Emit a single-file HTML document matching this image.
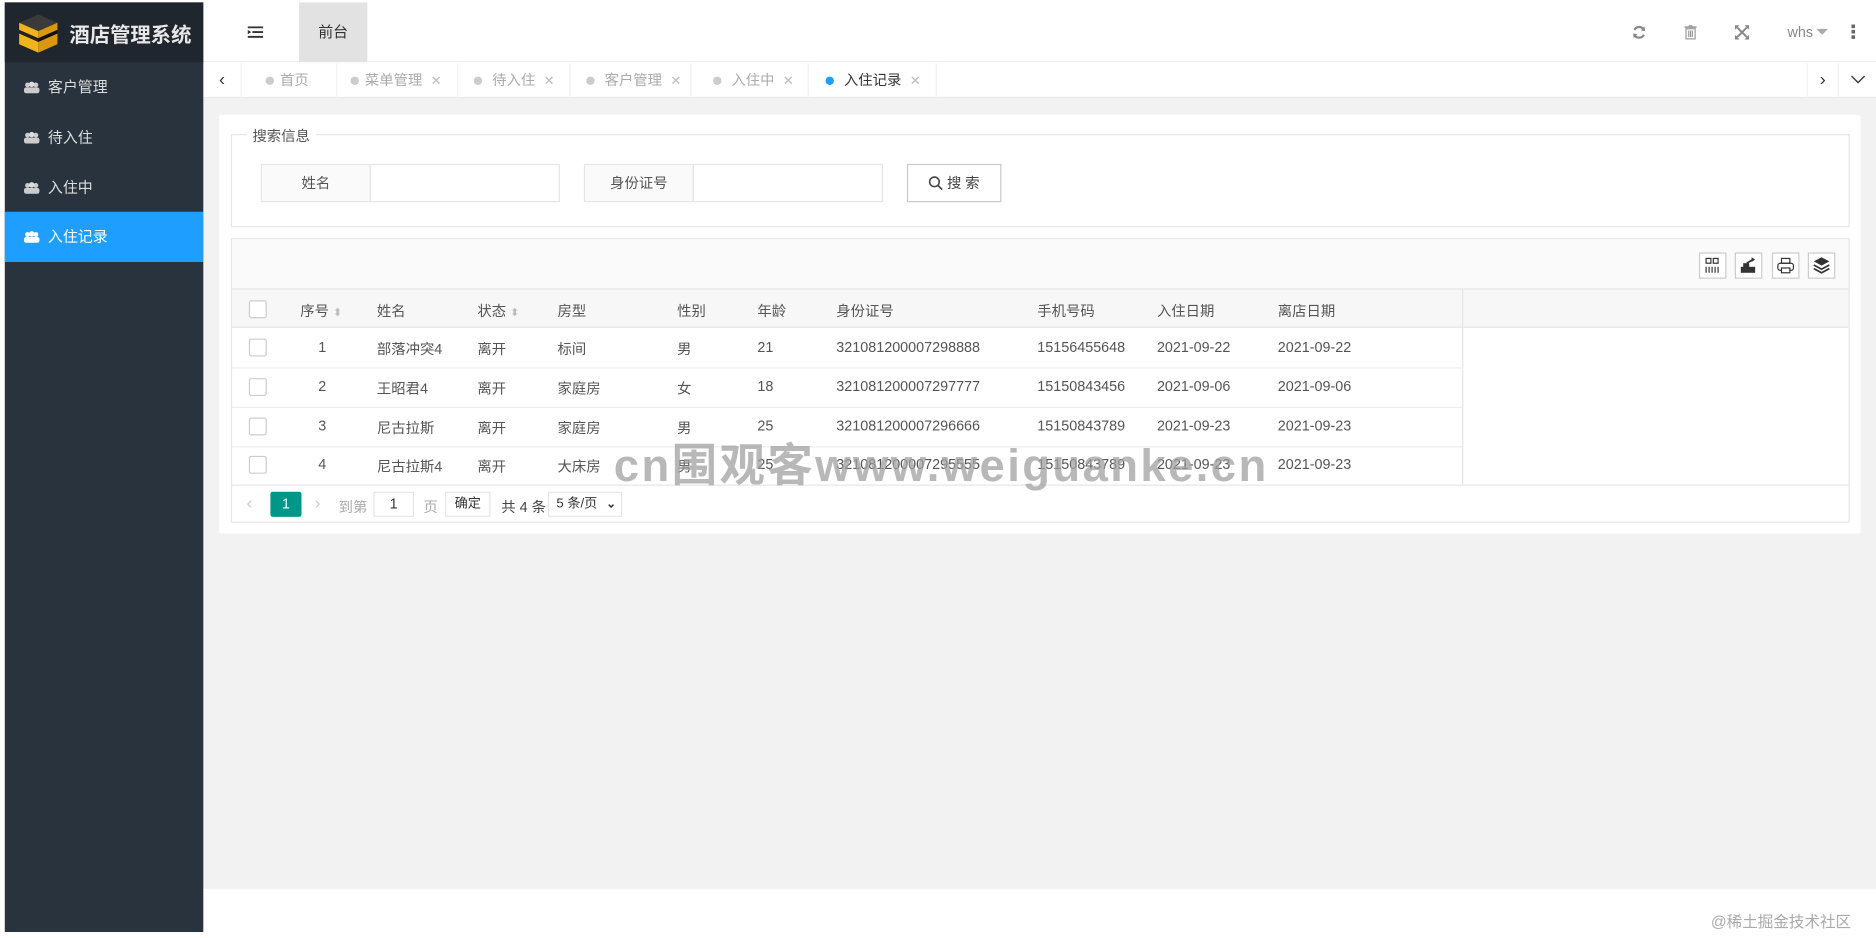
<!DOCTYPE html>
<html><head><meta charset="utf-8">
<style>
*{box-sizing:border-box;margin:0;padding:0}
html,body{width:1876px;height:938px;overflow:hidden;background:#fff;font-family:"Liberation Sans","Noto Sans CJK SC",sans-serif;font-size:12px;color:#555}
#w{position:absolute;left:0;top:0;width:1568px;height:784px;transform:scale(1.19643);transform-origin:0 0}
.a{position:absolute}
.side{left:4px;top:2px;width:166px;height:777px;background:#28333e}
.logo{left:0;top:0;width:166px;height:50px;background:#20262d}
.logo span{position:absolute;left:54px;top:13px;color:#e8e8e8;font-size:17px;font-weight:bold}
.mi{position:absolute;left:0;width:166px;height:42px;line-height:42px;padding-left:36px;color:#ddd;font-size:12.5px}
.mi i{position:absolute;left:16px;top:16px;width:13px;height:10px;display:block;line-height:0}
.mi i svg{display:block}
.hdr{left:170px;top:2px;width:1398px;height:50px;background:#fff;border-bottom:1px solid #eee;border-top-right-radius:8px}
.tabs{left:170px;top:53px;width:1398px;height:29px;background:#fff;border-bottom:1px solid #e8e8e8}
.tab{position:absolute;top:0;height:29px;line-height:28px;border-right:1px solid #f0f0f0;color:#aaa;font-size:12px}
.tab b{display:inline-block;width:7px;height:7px;border-radius:50%;background:#ccc;margin-right:5px;vertical-align:0}
.tab em{font-style:normal;color:#bbb;margin-left:7px;font-size:11px}
.cont{left:170px;top:82px;width:1398px;height:661px;background:#f2f2f2}
.foot{left:170px;top:743px;width:1398px;height:36px;background:#fff}
.card{left:183px;top:96px;width:1372px;height:350px;background:#fff;border-radius:2px}
.box{position:absolute;border:1px solid #e6e6e6}
.th,.td{position:absolute;font-size:12px}
.cb{position:absolute;left:14px;width:15px;height:15px;border:1px solid #ccc;background:#fff;border-radius:2px}
.tbi{position:absolute;top:11px;width:23px;height:22px;border:1px solid #ccc;background:#fff}
</style></head><body><div id="w">
<div class="a side">
 <div class="a logo">
  <svg style="position:absolute;left:10px;top:8px" width="36" height="36" viewBox="0 0 36 36"><polygon points="18,2 34,9 18,16 2,9" fill="#3a3a3a"/><polygon points="2,9 18,16 18,22 2,15" fill="#f2b41c"/><polygon points="34,9 18,16 18,22 34,15" fill="#d9980e"/><polygon points="2,18 18,25 18,34 2,27" fill="#f2b41c"/><polygon points="34,18 18,25 18,34 34,27" fill="#d9980e"/><polygon points="2,15 18,22 18,25 2,18" fill="#222"/><polygon points="34,15 18,22 18,25 34,18" fill="#111"/></svg>
  <span>酒店管理系统</span></div>
 <div class="mi" style="top:50px"><i><svg width="13" height="10"><circle cx="3" cy="3" r="2" fill="#ccc"/><circle cx="10" cy="3" r="2" fill="#ccc"/><circle cx="6.5" cy="2.5" r="2.3" fill="#ddd"/><rect x="0" y="5" width="13" height="5" rx="2" fill="#ccc"/></svg></i>客户管理</div>
 <div class="mi" style="top:92px"><i><svg width="13" height="10"><circle cx="3" cy="3" r="2" fill="#ccc"/><circle cx="10" cy="3" r="2" fill="#ccc"/><circle cx="6.5" cy="2.5" r="2.3" fill="#ddd"/><rect x="0" y="5" width="13" height="5" rx="2" fill="#ccc"/></svg></i>待入住</div>
 <div class="mi" style="top:134px"><i><svg width="13" height="10"><circle cx="3" cy="3" r="2" fill="#ccc"/><circle cx="10" cy="3" r="2" fill="#ccc"/><circle cx="6.5" cy="2.5" r="2.3" fill="#ddd"/><rect x="0" y="5" width="13" height="5" rx="2" fill="#ccc"/></svg></i>入住中</div>
 <div class="mi" style="top:175px;background:#1e9fff;color:#fff"><i><svg width="13" height="10"><circle cx="3" cy="3" r="2" fill="#fff"/><circle cx="10" cy="3" r="2" fill="#fff"/><circle cx="6.5" cy="2.5" r="2.3" fill="#fff"/><rect x="0" y="5" width="13" height="5" rx="2" fill="#fff"/></svg></i>入住记录</div>
</div>
<div class="a hdr">
 <svg style="position:absolute;left:37px;top:20px" width="13" height="10"><rect x="0" y="0" width="13" height="1.6" fill="#333"/><rect x="4" y="4" width="9" height="1.6" fill="#333"/><rect x="0" y="8" width="13" height="1.6" fill="#333"/><polygon points="0,3 3,4.8 0,6.6" fill="#333"/></svg>
 <div style="position:absolute;left:80px;top:0;width:57px;height:50px;background:#e2e2e2;line-height:50px;text-align:center;color:#333;font-size:12.5px">前台</div>
 <svg style="position:absolute;left:1194px;top:19px" width="12" height="12" viewBox="0 0 12 12"><path d="M10 4A4.5 4.5 0 0 0 2 4M2 8a4.5 4.5 0 0 0 8 0" stroke="#888" stroke-width="1.8" fill="none"/><polygon points="10.5,1 11,5 7.5,4.5" fill="#888"/><polygon points="1.5,11 1,7 4.5,7.5" fill="#888"/></svg>
 <svg style="position:absolute;left:1238px;top:19px" width="10" height="12"><rect x="0" y="1" width="10" height="1.3" fill="#999"/><rect x="3.5" y="0" width="3" height="1.5" fill="#999"/><rect x="1.2" y="3" width="7.6" height="8.5" fill="none" stroke="#999"/><line x1="3.5" y1="4.5" x2="3.5" y2="10" stroke="#999"/><line x1="5" y1="4.5" x2="5" y2="10" stroke="#999"/><line x1="6.5" y1="4.5" x2="6.5" y2="10" stroke="#999"/></svg>
 <svg style="position:absolute;left:1280px;top:19px" width="12" height="12"><path d="M0 0h4l-4 4zM12 0v4l-4-4zM0 12v-4l4 4zM12 12h-4l4-4z" fill="#888"/><path d="M2 2l8 8M10 2l-8 8" stroke="#888" stroke-width="1.6"/></svg>
 <span style="position:absolute;left:1324px;top:18px;color:#888;font-size:12px">whs</span>
 <svg style="position:absolute;left:1348px;top:22px" width="10" height="6"><polygon points="0,0 10,0 5,5" fill="#aaa"/></svg>
 <svg style="position:absolute;left:1377px;top:18px" width="4" height="13"><rect x="0.5" y="0.5" width="3" height="3" fill="#666"/><rect x="0.5" y="5" width="3" height="3" fill="#666"/><rect x="0.5" y="9.5" width="3" height="3" fill="#666"/></svg>
</div>
<div class="a tabs">
 <div class="tab" style="left:0;width:32px;text-align:center;color:#333;font-size:15px">‹</div>
 <div class="tab" style="left:32px;width:80px;padding-left:20px"><b></b>首页</div>
 <div class="tab" style="left:112px;width:101px;padding-left:11px"><b></b>菜单管理<em>✕</em></div>
 <div class="tab" style="left:213px;width:94px;padding-left:13px"><b></b> 待入住<em>✕</em></div>
 <div class="tab" style="left:307px;width:101px;padding-left:13px"><b></b> 客户管理<em>✕</em></div>
 <div class="tab" style="left:408px;width:98px;padding-left:18px"><b></b> 入住中<em>✕</em></div>
 <div class="tab" style="left:506px;width:107px;padding-left:14px;color:#333"><b style="background:#1e9fff"></b> 入住记录<em>✕</em></div>
 <div class="tab" style="left:1340px;width:27px;border-left:1px solid #f0f0f0;text-align:center;color:#333;font-size:15px">›</div>
 <svg style="position:absolute;left:1377px;top:10px" width="12" height="7"><path d="M0.5 0.5l5.5 5.5 5.5-5.5" stroke="#444" fill="none" stroke-width="1.2"/></svg>
</div>
<div class="a cont"></div>
<div class="a foot"></div>
<div class="a" style="left:1430px;top:760px;color:#aaa;font-size:13px">@稀土掘金技术社区</div>
<div class="a card">
 <div class="box" style="left:10px;top:16px;width:1353px;height:78px"></div>
 <div class="a" style="left:23px;top:9px;background:#fff;padding:0 5px;color:#555;font-size:12px">搜索信息</div>
 <div class="box" style="left:35px;top:41px;width:92px;height:32px;background:#fafafa;text-align:center;line-height:30px">姓名</div>
 <div class="box" style="left:126px;top:41px;width:159px;height:32px"></div>
 <div class="box" style="left:305px;top:41px;width:92px;height:32px;background:#fafafa;text-align:center;line-height:30px">身份证号</div>
 <div class="box" style="left:396px;top:41px;width:159px;height:32px"></div>
 <div class="box" style="left:575px;top:41px;width:79px;height:32px;border-color:#c9c9c9;text-align:center;line-height:30px;color:#444">
  <svg style="vertical-align:-2px" width="12" height="12"><circle cx="5" cy="5" r="4" stroke="#444" fill="none" stroke-width="1.3"/><line x1="8" y1="8" x2="11.5" y2="11.5" stroke="#444" stroke-width="1.4"/></svg> 搜 索</div>
 <div class="box" style="left:10px;top:103px;width:1353px;height:238px">
  <div class="a" style="left:0;top:0;width:1351px;height:42px;background:#fafafa;border-bottom:1px solid #e6e6e6">
   <div class="tbi" style="left:1226px"><svg width="21" height="20"><rect x="5" y="4" width="4" height="4" fill="none" stroke="#333"/><rect x="11" y="4" width="4" height="4" fill="none" stroke="#333"/><path d="M5 11v5M7.5 11v5M10 11v5M12.5 11v5M15 11v5" stroke="#333"/></svg></div>
   <div class="tbi" style="left:1256px"><svg width="21" height="20"><rect x="4" y="11" width="12" height="5" fill="#333"/><rect x="6" y="8" width="5" height="4" fill="#333"/><path d="M9 8l5-3" stroke="#333" stroke-width="1.5"/><polygon points="13,3 16,5 13,7" fill="#333"/></svg></div>
   <div class="tbi" style="left:1287px"><svg width="21" height="20"><rect x="7" y="4" width="7" height="4" fill="none" stroke="#333"/><rect x="4" y="8" width="13" height="6" rx="2" fill="none" stroke="#333"/><rect x="7" y="12" width="7" height="4" fill="#fff" stroke="#333"/></svg></div>
   <div class="tbi" style="left:1317px"><svg width="21" height="20"><polygon points="10.5,3 17,6.5 10.5,10 4,6.5" fill="#333"/><path d="M4 9.5l6.5 3.5 6.5-3.5M4 12.5l6.5 3.5 6.5-3.5" stroke="#333" fill="none" stroke-width="1.4"/></svg></div>
  </div>
  <div class="a" style="left:0;top:42px;width:1351px;height:32px;background:#f7f7f7;border-bottom:1px solid #e6e6e6"></div>
  <div class="a" style="left:1028px;top:42px;width:1px;height:163px;background:#e6e6e6"></div>
  <div class="a" style="left:0;top:107px;width:1028px;height:1px;background:#eee"></div>
  <div class="a" style="left:0;top:140px;width:1028px;height:1px;background:#eee"></div>
  <div class="a" style="left:0;top:173px;width:1028px;height:1px;background:#eee"></div>
  <div class="a" style="left:0;top:205px;width:1351px;height:1px;background:#e6e6e6"></div>
  <div class="cb" style="top:51px"></div>
  <div class="th" style="left:57px;top:51px">序号 <span style="color:#bbb;font-size:9px">⬍</span></div>
  <div class="th" style="left:121px;top:51px">姓名</div>
  <div class="th" style="left:205px;top:51px">状态 <span style="color:#bbb;font-size:9px">⬍</span></div>
  <div class="th" style="left:272px;top:51px">房型</div>
  <div class="th" style="left:372px;top:51px">性别</div>
  <div class="th" style="left:439px;top:51px">年龄</div>
  <div class="th" style="left:505px;top:51px">身份证号</div>
  <div class="th" style="left:673px;top:51px">手机号码</div>
  <div class="th" style="left:773px;top:51px">入住日期</div>
  <div class="th" style="left:874px;top:51px">离店日期</div>

  <div class="cb" style="top:83px"></div><div class="td" style="left:72px;top:83px">1</div><div class="td" style="left:121px;top:83px">部落冲突4</div><div class="td" style="left:205px;top:83px">离开</div><div class="td" style="left:272px;top:83px">标间</div><div class="td" style="left:372px;top:83px">男</div><div class="td" style="left:439px;top:83px">21</div><div class="td" style="left:505px;top:83px">321081200007298888</div><div class="td" style="left:673px;top:83px">15156455648</div><div class="td" style="left:773px;top:83px">2021-09-22</div><div class="td" style="left:874px;top:83px">2021-09-22</div>
  <div class="cb" style="top:116px"></div><div class="td" style="left:72px;top:116px">2</div><div class="td" style="left:121px;top:116px">王昭君4</div><div class="td" style="left:205px;top:116px">离开</div><div class="td" style="left:272px;top:116px">家庭房</div><div class="td" style="left:372px;top:116px">女</div><div class="td" style="left:439px;top:116px">18</div><div class="td" style="left:505px;top:116px">321081200007297777</div><div class="td" style="left:673px;top:116px">15150843456</div><div class="td" style="left:773px;top:116px">2021-09-06</div><div class="td" style="left:874px;top:116px">2021-09-06</div>
  <div class="cb" style="top:149px"></div><div class="td" style="left:72px;top:149px">3</div><div class="td" style="left:121px;top:149px">尼古拉斯</div><div class="td" style="left:205px;top:149px">离开</div><div class="td" style="left:272px;top:149px">家庭房</div><div class="td" style="left:372px;top:149px">男</div><div class="td" style="left:439px;top:149px">25</div><div class="td" style="left:505px;top:149px">321081200007296666</div><div class="td" style="left:673px;top:149px">15150843789</div><div class="td" style="left:773px;top:149px">2021-09-23</div><div class="td" style="left:874px;top:149px">2021-09-23</div>
  <div class="cb" style="top:181px"></div><div class="td" style="left:72px;top:181px">4</div><div class="td" style="left:121px;top:181px">尼古拉斯4</div><div class="td" style="left:205px;top:181px">离开</div><div class="td" style="left:272px;top:181px">大床房</div><div class="td" style="left:372px;top:181px">男</div><div class="td" style="left:439px;top:181px">25</div><div class="td" style="left:505px;top:181px">321081200007295555</div><div class="td" style="left:673px;top:181px">15150843789</div><div class="td" style="left:773px;top:181px">2021-09-23</div><div class="td" style="left:874px;top:181px">2021-09-23</div>

  <div class="td" style="left:12px;top:212px;color:#ccc;font-size:15px">‹</div>
  <div class="a" style="left:32px;top:211px;width:26px;height:21px;background:#009688;color:#fff;text-align:center;line-height:21px;border-radius:2px">1</div>
  <div class="td" style="left:69px;top:212px;color:#ccc;font-size:15px">›</div>
  <div class="td" style="left:89px;top:215px;color:#aaa">到第</div>
  <div class="box" style="left:118px;top:211px;width:34px;height:21px;text-align:center;line-height:19px;color:#333">1</div>
  <div class="td" style="left:160px;top:215px;color:#aaa">页</div>
  <div class="box" style="left:178px;top:211px;width:38px;height:21px;text-align:center;line-height:19px;color:#333;font-size:11px">确定</div>
  <div class="td" style="left:225px;top:215px;color:#444">共 4 条</div>
  <div class="box" style="left:264px;top:211px;width:62px;height:21px;line-height:19px;padding-left:6px;color:#333;font-size:11px">5 条/页 <span style="position:absolute;right:4px;font-size:10px;font-weight:bold">⌄</span></div>
 </div>
</div>
<div class="a" style="left:513px;top:358px;font-size:38px;font-weight:bold;color:rgba(160,160,160,0.75);letter-spacing:2px;font-family:'Liberation Sans','Noto Sans CJK SC',sans-serif;white-space:nowrap">cn围观客www.weiguanke.cn</div>
</div></body></html>
